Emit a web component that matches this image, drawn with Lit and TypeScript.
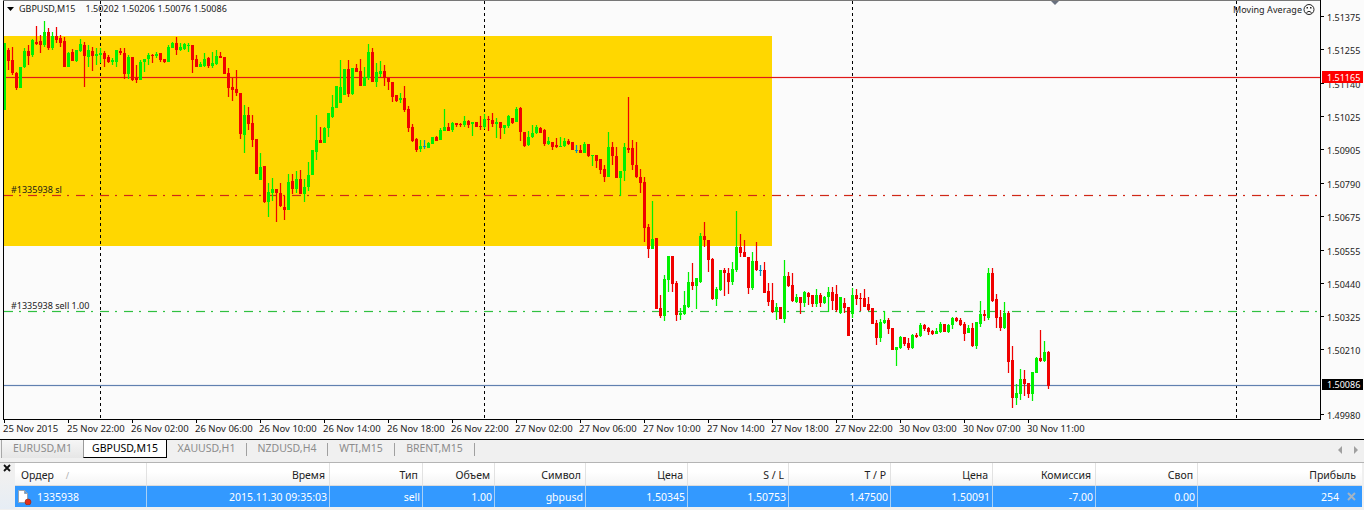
import { LitElement, html, css, svg } from "lit";
import { customElement } from "lit/decorators.js";

type Seg = { n0: number; y0: number; rows: string };

const SEGS: Seg[] = [
  { n0: 0, y0: 0, rows: "g130,330,130,330 r150,182,143,210 r180,220,140,225 r220,265,216,270 g200,263,200,265 g153,200,145,205 r153,168,135,195 g120,165,118,170 r125,133,78,135 r123,135,105,160 g95,135,63,140 r95,145,85,150 g108,145,95,150 r108,120,82,130 r115,128,105,140 r123,200,110,200 g158,200,155,200 r155,183,148,183 g150,183,150,185 g133,153,118,155 r135,168,125,262 g150,170,135,200 r153,168,140,212 g162,168,145,195 g160,165,143,190 r158,178,152,202 r172,185,165,190 g180,185,175,195 g150,185,150,200 r153,160,143,165 r158,222,145,238 g170,222,165,238 r172,240,170,242 r235,240,195,248 g185,240,180,240 g178,187,178,215 g165,178,160,195 r165,168,162,190 g162,168,155,175 r160,180,160,185 r177,187,177,190 g140,185,135,185 g130,145,125,145 r128,150,112,165 g140,150,130,152 g133,148,128,150 g135,138,130,155 r135,180,135,218 r178,200,165,200 g192,200,185,202 g178,197,160,200 r175,197,170,205 g190,197,155,205 g168,192,150,195 r168,175,155,175 r170,222,170,222 r220,263,205,290 r262,270,235,303 r268,280,210,288 r280,403,280,418 g345,405,315,458 r345,372,320,390 r370,420,345,440 r418,522,418,522 g500,540,460,540 r498,605,498,610 g575,607,550,650 g567,578,535,602 r567,578,567,665 r578,618,550,622 r620,630,588,660 g547,630,522,630 r543,567,522,582 g537,567,512,580 r537,582,510,582 g560,582,538,607 g525,562,485,572 g450,525,450,525 g420,455,345,480 r420,428,380,430 g385,428,380,430 g340,385,340,410 g322,350,285,355 g258,325,258,325" },
  { n0: 84, y0: 30, rows: "g170,220,90,220 g118,195,118,195 r118,192,90,200 g115,192,113,195 r113,125,103,125 r123,167,87,167 g140,167,110,167 g65,145,42,150 r65,155,55,155 g125,155,100,170 g123,133,93,140 r123,143,105,168 r143,157,143,180 r157,200,157,217 r195,212,195,215 g205,210,190,218 r205,240,168,245 r237,293,228,305 r292,333,283,335 r328,360,325,365 g348,358,330,365 t348,351,330,358 g340,355,335,355 g322,342,320,342 r320,332,318,332 g300,330,295,330 g292,302,237,302 r292,302,278,302 g280,300,275,305 r280,285,280,290 r282,285,278,292 g274,284,258,290 r273,285,270,293 g276,282,276,318 r277,290,277,290 r288,291,258,300 g268,292,253,298 r266,270,258,303 r270,282,250,290 g277,282,265,323 r277,293,277,327 g285,295,285,312 g258,288,255,295 r265,280,265,283 g237,275,230,277 r233,307,230,333 r307,348,307,350 g322,345,303,347 g310,322,285,325 g290,310,285,312 r295,310,292,310 r300,343,298,347 g333,343,322,345 r335,350,335,360 r345,352,323,355 g348,350,322,352 g333,348,325,350 r333,342,328,345 r335,360,335,360 t360,362,345,368 r360,368,345,370 g342,368,335,368 r342,378,342,380 g376,378,376,407 r376,392,376,415 r388,420,388,433 r417,440,405,455 g352,440,307,440 r352,378,335,405 r378,443,350,445 g423,443,423,497 g350,423,340,452 r355,360,200,368 r355,405,330,420 r405,442,335,445 r442,458,417,490" },
  { n0: 160, y0: 90, rows: "r277,413,262,455 r410,477,403,503 g447,477,333,477 r445,657,445,657 r655,678,615,685 g568,678,555,692 g498,570,498,605 r497,582,497,605 r578,675,573,692 g668,675,655,690 g645,672,603,675 g577,652,547,655 r575,588,518,600 g565,588,565,657 g438,577,430,580 r438,450,397,470 r450,510,450,545 r507,628,505,630 g597,628,590,647 g540,600,540,602 r540,548,533,617 r548,577,535,612 g538,577,515,585 g472,540,362,545 r472,490,433,500 r487,502,450,502 r502,593,502,612 g513,593,487,600 r513,540,457,543 t539,542,525,558 r540,608,517,610 r603,637,580,648 r630,665,578,668 g652,665,640,690 r652,687,652,687 g558,687,510,700 r558,588,547,590 r585,633,550,635 g620,637,612,640 r622,640,622,673 g605,640,603,650 r608,620,605,645 r615,642,615,650 g615,642,597,650 r615,640,610,650 g620,640,618,642 g607,620,590,665 r605,632,590,660 r612,660,585,665" },
  { n0: 209, y0: 250, rows: "g140,190,140,192 r158,175,145,190 r170,258,170,258 g135,192,115,205 r135,147,118,165 r145,147,130,182 r143,170,118,170 r162,180,140,183 r175,222,175,222 r220,265,210,285 g215,265,207,275 g210,220,183,222 r210,237,205,252 r233,300,233,300 g292,300,292,347 g260,293,258,298 r262,282,262,288 r280,295,265,300 g255,295,252,298 r255,262,250,265 g225,258,218,260 r225,238,222,243 r235,247,232,255 r243,252,240,255 g243,252,235,253 g222,247,215,248 r222,246,222,246 g225,247,222,250 g205,225,200,237 r205,213,200,215 r210,225,203,228 r222,252,217,273 g235,248,225,250 r235,287,220,290 g217,288,215,297 g192,222,153,230 r192,198,180,212 g68,205,55,210 r68,152,55,157 r148,203,132,233 r200,233,180,242 g190,235,155,238 r188,335,183,368 r330,443,288,473 g430,443,403,465 g388,432,357,450 r388,402,360,438 r400,432,400,445 g367,433,365,452 g323,368,320,370 r323,333,240,335 g307,333,273,337 r305,407,303,417" },
];

const COLORS: Record<string, string> = { g: "#00f000", r: "#f00000", t: "#0090c0" };

const CANDLES = SEGS.flatMap((s) =>
  s.rows.split(" ").map((row, i) => {
    const [bt, bb, wt, wb] = row.slice(1).split(",").map((v) => Math.round(s.y0 + Number(v) / 3));
    return { x: 4 + 4 * (s.n0 + i), c: COLORS[row[0]], bt, bb, wt, wb };
  })
);

const PRICES: [string, number][] = [
  ["1.51375", 17], ["1.51255", 50], ["1.51140", 84], ["1.51025", 117], ["1.50905", 150],
  ["1.50790", 184], ["1.50675", 217], ["1.50555", 251], ["1.50440", 284], ["1.50325", 317],
  ["1.50210", 350], ["1.49980", 415],
];

const TIMES = [
  "25 Nov 2015", "25 Nov 22:00", "26 Nov 02:00", "26 Nov 06:00", "26 Nov 10:00", "26 Nov 14:00",
  "26 Nov 18:00", "26 Nov 22:00", "27 Nov 02:00", "27 Nov 06:00", "27 Nov 10:00", "27 Nov 14:00",
  "27 Nov 18:00", "27 Nov 22:00", "30 Nov 03:00", "30 Nov 07:00", "30 Nov 11:00",
];

const TABS: { label: string; cls: string }[] = [
  { label: "EURUSD,M1", cls: "first" },
  { label: "GBPUSD,M15", cls: "active" },
  { label: "XAUUSD,H1", cls: "plain w80" },
  { label: "NZDUSD,H4", cls: "plain w81" },
  { label: "WTI,M15", cls: "plain w67" },
  { label: "BRENT,M15", cls: "plain w80" },
];

const HEAD = ["Время", "Тип", "Объем", "Символ", "Цена", "S / L", "T / P", "Цена", "Комиссия", "Своп"];
const ROW = ["2015.11.30 09:35:03", "sell", "1.00", "gbpusd", "1.50345", "1.50753", "1.47500", "1.50091", "-7.00", "0.00"];

@customElement("app-root")
export class AppRoot extends LitElement {
  static styles = css`
    :host { display: block; width: 1364px; height: 510px; overflow: hidden; background: #f0f0f0; font-family: "Noto Sans", "Liberation Sans", sans-serif; }
    .chart { display: block; width: 1364px; height: 439px; background: #fbfbfb; }
    .chart text { font-family: "Noto Sans", "Liberation Sans", sans-serif; font-size: 9px; fill: #1a1a1a; }
    .chart text.time { font-size: 9.5px; }
    .chart text.wht { fill: #fff; }
    .tabs { display: flex; height: 23px; box-sizing: border-box; border-top: 1px solid #000; padding-left: 1px; background: #f0f0f0; font-size: 10.5px; color: #8c8c8c; }
    .tab { text-align: center; box-sizing: border-box; white-space: nowrap; }
    .tab.plain { height: 13px; line-height: 10px; margin-top: 3px; border-right: 1px solid #a0a0a0; }
    .tab.first { width: 82px; height: 18px; line-height: 16px; border-left: 1px solid #a8a8a8; background: linear-gradient(#f6f6f6, #e6e6e6); }
    .tab.active { width: 84px; height: 18px; line-height: 16px; color: #000; background: #fff; border-left: 1px solid #9a9a9a; border-right: 1px solid #000; border-bottom: 1px solid #000; }
    .tab.w80 { width: 80px; } .tab.w81 { width: 81px; } .tab.w67 { width: 67px; }
    .spacer { flex: 1; }
    .arrows { display: flex; gap: 10px; padding: 5px 5px 0 0; height: 10px; }
    .panel { display: flex; height: 47px; box-sizing: border-box; border-top: 1px solid #b4b4b4; }
    .side { width: 15px; background: linear-gradient(#f0f0f0 30%, #e6edf5); flex: none; }
    .side svg { display: block; margin: 1px 0 0 3px; }
    .table { width: 1347px; display: grid; grid-template-columns: 132px 183px 93px 72px 91px 102px 101px 102px 102px 103px 102px 164px; grid-template-rows: 23px 21px; font-size: 10.5px; }
    .h { background: linear-gradient(#fff 40%, #f4f4f4); border-right: 1px solid #e2e2e2; border-bottom: 1px solid #dcdcdc; color: #222; text-align: right; padding-right: 4px; line-height: 24px; box-sizing: border-box; white-space: nowrap; }
    .h.order { text-align: left; padding-left: 6px; }
    .h.last { padding-right: 6px; border-right: 0; }
    .h .sort { color: #b0b0b0; margin-left: 12px; font-size: 9px; }
    .c { background: #3399ff; color: #fff; border-right: 1px solid #a9d0f5; text-align: right; padding-right: 2px; line-height: 22px; box-sizing: border-box; white-space: nowrap; }
    .c.order { display: flex; gap: 5px; align-items: center; text-align: left; padding-left: 2px; }
    .c.profit { display: flex; justify-content: flex-end; align-items: center; gap: 8px; border-right: 0; padding-right: 6px; }
    .c svg { display: block; flex: none; }
  `;

  private hline(y: number, color: string, dash = "") {
    return svg`
      <line x1="4" x2="1320" y1=${y - 0.5} y2=${y - 0.5} stroke=${color} stroke-opacity=".1" stroke-dasharray=${dash}></line>
      <line x1="4" x2="1320" y1=${y + 1.5} y2=${y + 1.5} stroke=${color} stroke-opacity=".1" stroke-dasharray=${dash}></line>
      <line x1="4" x2="1320" y1=${y + 0.5} y2=${y + 0.5} stroke=${color} stroke-dasharray=${dash}></line>
    `;
  }

  private chart() {
    const dash = "9 6 2 7";
    return svg`
      <rect x="4" y="36" width="768" height="210" fill="#ffd700"></rect>
      ${[100, 484, 852, 1236].map((x) => svg`<line x1=${x + 0.5} x2=${x + 0.5} y1="1" y2="419" stroke="#000" stroke-dasharray="3 3"></line>`)}
      ${this.hline(77, "#e01818")}
      ${this.hline(195, "#d02818", dash)}
      ${this.hline(311, "#30c040", dash)}
      ${this.hline(385, "#6080b0")}
      <g shape-rendering="crispEdges">
        ${CANDLES.map((k) => svg`
          <rect x=${k.x - 1} y=${k.wt} width="3" height=${Math.max(1, k.wb - k.wt)} fill=${k.c} fill-opacity=".12"></rect>
          <rect x=${k.x} y=${k.wt} width="1" height=${Math.max(1, k.wb - k.wt)} fill=${k.c}></rect>
          <rect x=${k.x - 1} y=${k.bt} width="3" height=${Math.max(1, k.bb - k.bt)} fill=${k.c}></rect>
        `)}
      </g>
      <path d="M1050 0h10l-5 5z" fill="#6a7280"></path>
      <rect x="3" y="0" width="1" height="419" fill="#000"></rect>
      <rect x="3" y="0" width="1317" height="1" fill="#777"></rect>
      <rect x="3" y="419" width="1317" height="1" fill="#000"></rect>
      <rect x="1320" y="0" width="1" height="420" fill="#000"></rect>
      <path d="M7 7h7l-3.5 4z" fill="#000"></path>
      <text x="19" y="12">GBPUSD,M15</text>
      <text x="85.5" y="12">1.50202</text>
      <text x="121.5" y="12">1.50206</text>
      <text x="157.5" y="12">1.50076</text>
      <text x="193.5" y="12">1.50086</text>
      <text x="1233" y="13" textLength="69">Moving Average</text>
      <g fill="none" stroke="#222">
        <circle cx="1309" cy="9.5" r="5"></circle>
        <path d="M1306.5 12.5q2.5-2.5 5 0"></path>
      </g>
      <path d="M1306.5 7h1.5v1.5h-1.5zM1310 7h1.5v1.5h-1.5z" fill="#222"></path>
      <text x="11" y="193">#1335938 sl</text>
      <text x="11" y="309">#1335938 sell 1.00</text>
      ${PRICES.map(([p, y]) => svg`
        <rect x="1321" y=${y - 1} width="3" height="1" fill="#000"></rect>
        <text x="1327" y=${y + 3.5}>${p}</text>
      `)}
      <rect x="1322" y="71" width="41" height="12" fill="#ff0000"></rect>
      <text class="wht" x="1327" y="80.5">1.51165</text>
      <rect x="1322" y="379" width="41" height="11" fill="#000"></rect>
      <text class="wht" x="1327" y="388">1.50086</text>
      ${TIMES.map((t, i) => svg`
        <rect x=${4 + 64 * i} y="420" width="1" height="3" fill="#000"></rect>
        <text class="time" x=${3 + 64 * i} y="432">${t}</text>
      `)}
    `;
  }

  render() {
    return html`
      <svg class="chart" viewBox="0 0 1364 439">${this.chart()}</svg>
      <div class="tabs">
        ${TABS.map((t) => html`<div class="tab ${t.cls}">${t.label}</div>`)}
        <div class="spacer"></div>
        <div class="arrows">
          <svg width="6" height="10" viewBox="0 0 6 10"><path d="M5 1v8L1 5z" fill="#a0a0a0"></path></svg>
          <svg width="6" height="10" viewBox="0 0 6 10"><path d="M1 1v8l4-4z" fill="#a0a0a0"></path></svg>
        </div>
      </div>
      <div class="panel">
        <div class="side">
          <svg width="8" height="8" viewBox="0 0 8 8"><path d="M1 1l6 6M7 1L1 7" stroke="#111" stroke-width="1.8"></path></svg>
        </div>
        <div class="table">
          <div class="h order">Ордер<span class="sort">/</span></div>
          ${HEAD.map((h) => html`<div class="h">${h}</div>`)}
          <div class="h last">Прибыль</div>
          <div class="c order">
            <svg width="15" height="17" viewBox="0 0 15 17">
              <path d="M1.5 2.5h6l3 3v9h-9zM7.5 2.5v3h3" fill="#fff" stroke="#9aa4ae"></path>
              <circle cx="11" cy="14" r="3" fill="#e0301c" stroke="#8a2a18" stroke-width=".6"></circle>
            </svg>
            <span>1335938</span>
          </div>
          ${ROW.map((c) => html`<div class="c">${c}</div>`)}
          <div class="c profit">
            <span>254</span>
            <svg width="9" height="9" viewBox="0 0 9 9"><path d="M1 1l7 7M8 1L1 8" stroke="#a4b4c4" stroke-width="2"></path></svg>
          </div>
        </div>
      </div>
    `;
  }
}
